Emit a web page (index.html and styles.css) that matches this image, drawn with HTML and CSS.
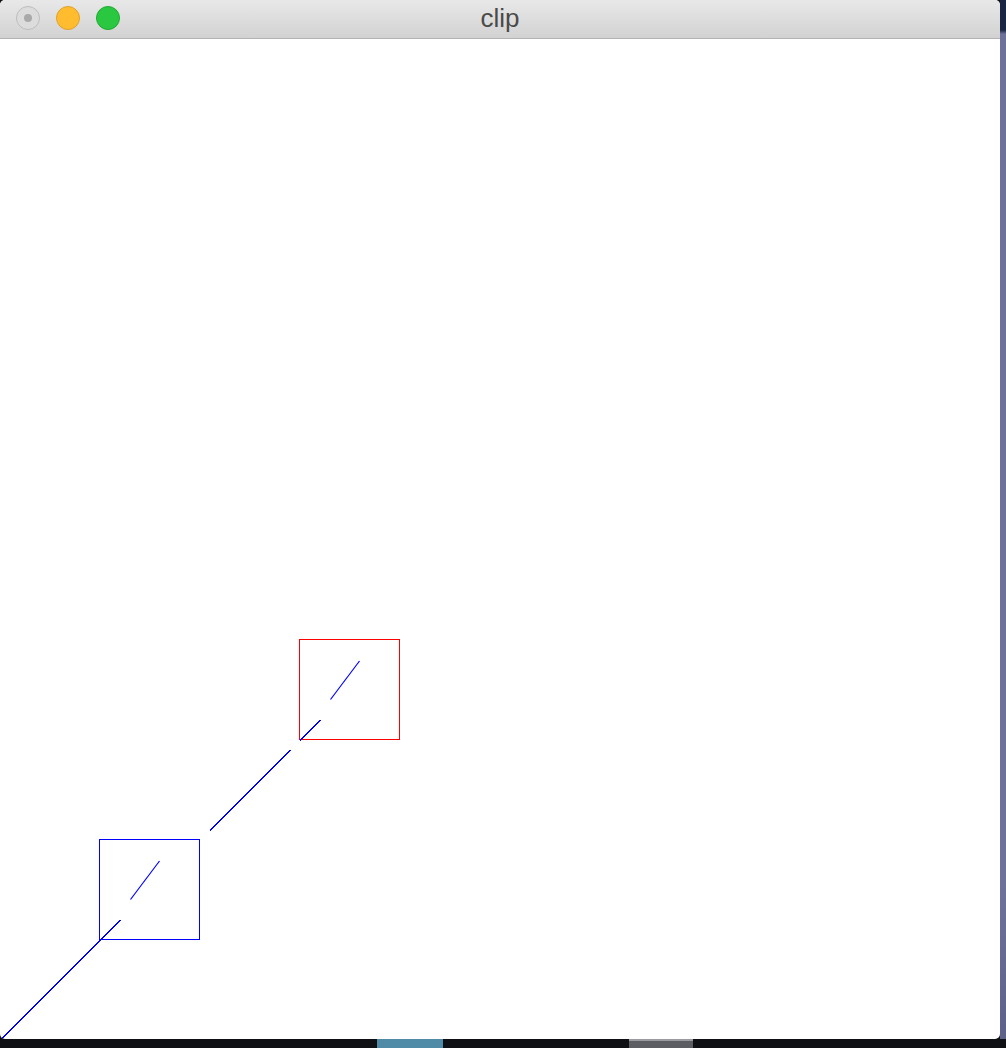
FILE: index.html
```html
<!DOCTYPE html>
<html>
<head>
<meta charset="utf-8">
<title>clip</title>
<link rel="stylesheet" href="styles.css">
</head>
<body>
<div class="desktop">
  <div class="window">
    <div class="titlebar">
      <div class="lights">
        <span class="light light-close"><span class="dot"></span></span>
        <span class="light light-min"></span>
        <span class="light light-max"></span>
      </div>
      <div class="title">clip</div>
      <div class="spacer"></div>
    </div>
    <div class="content">
      <svg class="canvas" width="1000" height="1000" viewBox="0 39 1000 1000" xmlns="http://www.w3.org/2000/svg">
        <g fill="none" stroke-width="1" shape-rendering="crispEdges">
          <rect x="299.5" y="639.5" width="100" height="100" stroke="#ff0000"/>
          <rect x="99.5" y="839.5" width="100" height="100" stroke="#0000ff"/>
        </g>
        <g stroke="#0000ff" stroke-width="1" fill="none" shape-rendering="crispEdges">
          <line x1="0" y1="1040.5" x2="120.5" y2="920"/>
          <line x1="210" y1="830.5" x2="290.5" y2="750"/>
          <line x1="300" y1="740.5" x2="320.5" y2="720"/>
        </g>
        <g stroke="#0000ff" stroke-width="1.2" fill="none">
          <line x1="130.5" y1="899.5" x2="159.5" y2="861"/>
          <line x1="330.5" y1="699.5" x2="359.5" y2="661"/>
        </g>
      </svg>
    </div>
  </div>
  <div class="wall-right"></div>
  <div class="dock">
    <span class="dock-app dock-teal"></span>
    <span class="dock-app dock-gray"></span>
  </div>
</div>
</body>
</html>
```

FILE: styles.css
```css
html, body {
  margin: 0;
  padding: 0;
  background: #101116;
}

.desktop {
  width: 1006px;
  height: 1048px;
  display: grid;
  grid-template-columns: 1000px 6px;
  grid-template-rows: 1039px 9px;
  background: #101116;
  overflow: hidden;
}

.window {
  grid-column: 1;
  grid-row: 1;
  display: flex;
  flex-direction: column;
  background: #ffffff;
  border-radius: 5px;
  overflow: hidden;
}

.titlebar {
  height: 38px;
  flex: 0 0 38px;
  border-bottom: 1px solid #b3b3b3;
  background: linear-gradient(#e8e8e8, #d2d2d2);
  display: grid;
  grid-template-columns: 1fr auto 1fr;
  align-items: center;
}

.lights {
  display: flex;
  align-items: center;
  gap: 16px;
  padding-left: 16px;
  padding-bottom: 2px;
}

.light {
  width: 24px;
  height: 24px;
  border-radius: 50%;
  box-sizing: border-box;
  display: flex;
  align-items: center;
  justify-content: center;
}

.light-close {
  background: #dcdcdc;
  border: 1px solid #bdbdbd;
}

.light-close .dot {
  width: 8px;
  height: 8px;
  border-radius: 50%;
  background: #a9a9a9;
}

.light-min {
  background: #febc2e;
  border: 1px solid #e1a02a;
}

.light-max {
  background: #2ac840;
  border: 1px solid #1eaa30;
}

.title {
  font-family: "Liberation Sans", Arial, sans-serif;
  font-size: 26px;
  color: #4a4a4a;
  padding-bottom: 2px;
}

.content {
  flex: 1;
  position: relative;
  overflow: hidden;
}

.canvas {
  display: block;
}

.wall-right {
  grid-column: 2;
  grid-row: 1;
  background: linear-gradient(#1a2544 0, #1a2544 30px, #6e7298 34px, #6e7298 85%, #5e6288 100%);
}

.dock {
  grid-column: 1 / span 2;
  grid-row: 2;
  display: flex;
  align-items: stretch;
  background: #0f1013;
}

.dock-app {
  display: block;
}

.dock-teal {
  margin-left: 377px;
  width: 66px;
  background: #4f8aa6;
}

.dock-gray {
  margin-left: 186px;
  width: 64px;
  background: #5c5d62;
  border-top: 2px solid #9a9aa0;
  box-sizing: border-box;
}
```
